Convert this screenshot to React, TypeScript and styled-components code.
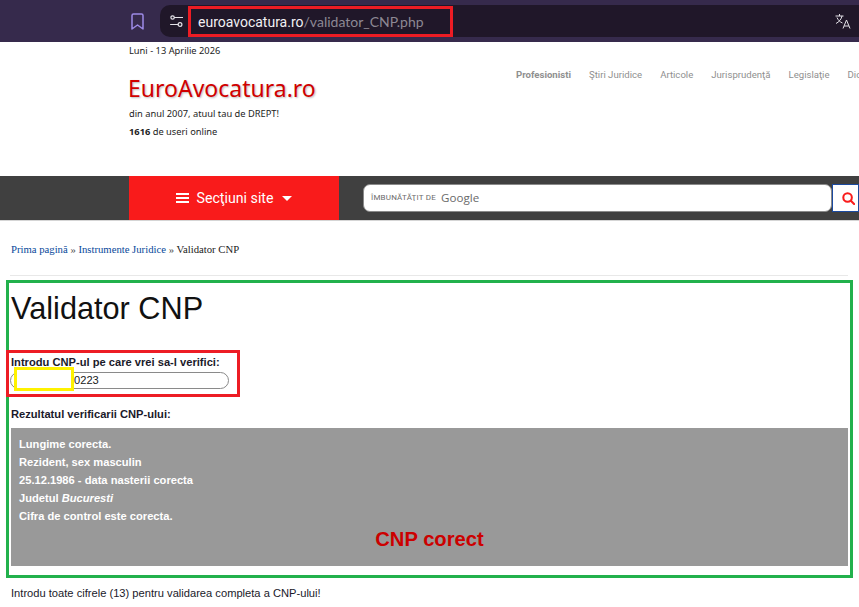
import React from "react";
import styled, { createGlobalStyle } from "styled-components";

const Global = createGlobalStyle`
  html, body { margin: 0; padding: 0; background: #fff; overflow: hidden; }
  body { width: 859px; height: 607px; font-family: "Liberation Sans", Arial, sans-serif; }
  * { box-sizing: border-box; }
`;
const Page = styled.div`
  width: 859px; height: 607px; overflow: hidden; display: flex; flex-direction: column;
`;
const BrowserBar = styled.div`
  height: 42px; flex: none; background: #362a4c; display: flex; align-items: center; padding: 0 0 0 131px;
`;
const BookmarkButton = styled.div`
  width: 13px; height: 17px; margin-right: 16px; display: flex; color: #9d8ae6;
`;
const AddressBar = styled.div`
  flex: 1; height: 32px; background: #201729; border-radius: 10px 0 0 10px; display: flex; align-items: center; padding-left: 10px; color: #e4e2e8;
`;
const TuneIcon = styled.div`
  width: 13px; height: 14px; display: flex; margin-right: 5px; color: #e4e2e8;
`;
const UrlHighlight = styled.div`
  width: 265px; height: 31px; border: 3px solid #ed1c24; display: flex; align-items: center; padding: 0 0 0 7px;
  font: 14px/1 "Roboto", sans-serif; white-space: nowrap; margin-top: 1px;
`;
const Host = styled.span` color: #f1f0f3; `;
const UrlPath = styled.span` color: #8d8894; font-family: "Lato", sans-serif; `;
const TranslateButton = styled.div`
  margin-left: auto; margin-right: 8px; width: 16px; height: 16px; display: flex; color: #e4e2e8;
`;
const Header = styled.header`
  height: 134px; flex: none; padding: 2px 0 0 129px; display: flex; overflow: hidden;
`;
const Brand = styled.div`
  width: 370px; flex: none; font-family: "Noto Sans", sans-serif; color: #1c1c1c;
`;
const Small = styled.div<{ $mt?: number }>`
  font-size: 9.3px; line-height: 13px; margin-top: ${(p) => p.$mt ?? 0}px; white-space: nowrap;
`;
const Logo = styled.div`
  font-size: 23px; line-height: 30px; margin-top: 16px; margin-left: -1px; color: #d00000; text-shadow: 1px 1px 2px #bbb; white-space: nowrap;
`;
const TopNav = styled.nav`
  display: flex; gap: 18px; padding: 24px 0 0 17px; font: 9.6px/13px "Roboto", sans-serif; color: #8f8f8f; white-space: nowrap;
`;
const NavItem = styled.span<{ $strong?: boolean }>`
  font-weight: ${(p) => (p.$strong ? 700 : 400)};
`;
const Band = styled.div`
  height: 45px; flex: none; background: #404040; padding-left: 129px; display: flex; align-items: stretch; border-bottom: 1px solid #d5d5d5;
`;
const Sections = styled.div`
  width: 210px; flex: none; background: #f91b1b; color: #fff; display: flex; align-items: center; justify-content: center; gap: 7px;
  font: 14.2px/1 "Roboto", sans-serif;
`;
const Caret = styled.span`
  width: 0; height: 0; margin-left: 1px; border: 5px solid transparent; border-top: 5px solid #fff; border-bottom: 0;
`;
const Search = styled.div`
  margin: 8px 0 8px 24px; display: flex; flex: 1;
`;
const SearchField = styled.div`
  flex: 1; background: #fff; border-radius: 7px; border: 1px solid #8a8a8a; display: flex; align-items: center; gap: 5px; padding-left: 7px;
`;
const Hint = styled.span`
  font: 8px/1 "Roboto", sans-serif; letter-spacing: 0.2px; color: #6c6c6c;
`;
const GoogleWord = styled.span`
  font: 11.6px/1 "Open Sans", sans-serif; color: #6a6a6a;
`;
const SearchButton = styled.div`
  width: 27px; flex: none; background: #fff; border: 1px solid #1b4aa0; display: flex; align-items: center; justify-content: center; padding-left: 5px; color: #f91b1b;
`;
const Main = styled.main`
  flex: 1; display: flex; flex-direction: column; padding: 0 6px;
`;
const Crumbs = styled.div`
  margin: 21px 5px 0 4px; padding: 0 0 19px 1px; height: 34px;
  font: 10.7px/14px "Liberation Serif", serif; color: #222; border-bottom: 1px solid #e8e8e8;
`;
const Crumb = styled.a` color: #07489a; `;
const Sep = styled.span` color: #555; `;
const Panel = styled.section`
  margin-top: 4px; height: 298px; border: 3px solid #22b14c; padding: 0 2px 0 2px; color: #1a1a1a;
`;
const Title = styled.h1`
  margin: 8px 0 0; font: 400 30.7px/36px "Liberation Sans", sans-serif; color: #111;
`;
const FormBox = styled.div`
  position: relative; margin: 23px 0 0 -5px; width: 234px; height: 47px; border: 3px solid #ed1c24; padding: 3px 0 0 2px;
`;
const Label = styled.div`
  font: 700 11.15px/13px "Liberation Sans", sans-serif; color: #1a1a2a;
`;
const CnpInput = styled.div`
  width: 219px; height: 17px; margin: 3px 0 0 -1px; border: 1px solid #8a8a8a; border-radius: 9px; padding-left: 63px;
  font: 11.15px/15px "Liberation Sans", sans-serif; color: #222;
`;
const Redaction = styled.div`
  position: absolute; left: 5px; top: 14px; width: 60px; height: 24px; background: #fff; border: 3px solid #fff200;
`;
const ResultLabel = styled(Label)`
  margin-top: 11px;
`;
const ResultBox = styled.div`
  margin-top: 7px; height: 138px; background: #999; padding: 7px 0 0 8px; color: #fff;
  font: 700 11.15px/18px "Liberation Sans", sans-serif; display: flex; flex-direction: column;
`;
const Verdict = styled.div`
  text-align: center; color: #cc0000; font: 700 20.2px/24px "Liberation Sans", sans-serif; margin-top: 2px; padding-right: 8px;
`;
const Note = styled.p`
  margin: 9px 0 0 5px; font: 11.15px/13px "Liberation Sans", sans-serif; color: #1a1a2a;
`;

const App: React.FC = () => (
  <Page>
    <Global />
    <BrowserBar>
      <BookmarkButton>
        <svg width="13" height="17" viewBox="0 0 13 17" fill="none" stroke="currentColor" strokeWidth="1.5" strokeLinejoin="round">
          <path d="M1 2.500a1.500 1.500 0 0 1 1.500-1.500h8a1.500 1.500 0 0 1 1.500 1.500V16L6.500 12 1 16Z" />
        </svg>
      </BookmarkButton>
      <AddressBar>
        <TuneIcon>
          <svg width="13" height="14" viewBox="0 0 13 14" fill="none" stroke="currentColor" strokeWidth="1.2" strokeLinecap="round">
            <circle cx="2.600" cy="3.500" r="1.700" />
            <path d="M4.500 3.500H12.500" />
            <path d="M0.600 10.500H8" />
            <circle cx="10" cy="10.500" r="1.900" />
          </svg>
        </TuneIcon>
        <UrlHighlight>
          <Host>euroavocatura.ro</Host>
          <UrlPath>/validator_CNP.php</UrlPath>
        </UrlHighlight>
        <TranslateButton>
          <svg width="16" height="16" viewBox="0 0 16 16" fill="none" stroke="currentColor" strokeWidth="1">
            <path d="M0.500 3h8M4.500 1v2M7 3C6.500 6 4 9 1 10.500M2 4.500c1 2.500 3 4.500 5.500 5.500" />
            <path d="M8 15.500 11.500 7l3.500 8.500M9.200 13h4.600" />
          </svg>
        </TranslateButton>
      </AddressBar>
    </BrowserBar>
    <Header>
      <Brand>
        <Small>Luni - 13 Aprilie 2026</Small>
        <Logo>EuroAvocatura.ro</Logo>
        <Small $mt={4}>din anul 2007, atuul tau de DREPT!</Small>
        <Small $mt={5}>
          <b>1616</b> de useri online
        </Small>
      </Brand>
      <TopNav>
        <NavItem $strong>Profesionisti</NavItem>
        <NavItem>Ştiri Juridice</NavItem>
        <NavItem>Articole</NavItem>
        <NavItem>Jurisprudenţă</NavItem>
        <NavItem>Legislaţie</NavItem>
        <NavItem>Dicţionar</NavItem>
      </TopNav>
    </Header>
    <Band>
      <Sections>
        <svg width="13" height="10" viewBox="0 0 13 10" fill="#fff">
          <path d="M0 0h13v2H0zM0 4h13v2H0zM0 8h13v2H0z" />
        </svg>
        <span>Secţiuni site</span>
        <Caret />
      </Sections>
      <Search>
        <SearchField>
          <Hint>ÎMBUNĂTĂŢIT DE</Hint>
          <GoogleWord>Google</GoogleWord>
        </SearchField>
        <SearchButton>
          <svg width="13" height="13" viewBox="0 0 14 14" fill="none" stroke="currentColor" strokeWidth="2.200" strokeLinecap="round">
            <circle cx="6" cy="6" r="4.600" />
            <path d="M9.500 9.500 13 13" />
          </svg>
        </SearchButton>
      </Search>
    </Band>
    <Main>
      <Crumbs>
        <Crumb>Prima pagină</Crumb> <Sep>»</Sep> <Crumb>Instrumente Juridice</Crumb> <Sep>»</Sep> Validator CNP
      </Crumbs>
      <Panel>
        <Title>Validator CNP</Title>
        <FormBox>
          <Label>Introdu CNP-ul pe care vrei sa-l verifici:</Label>
          <CnpInput>0223</CnpInput>
          <Redaction />
        </FormBox>
        <ResultLabel>Rezultatul verificarii CNP-ului:</ResultLabel>
        <ResultBox>
          <div>Lungime corecta.</div>
          <div>Rezident, sex masculin</div>
          <div>25.12.1986 - data nasterii corecta</div>
          <div>
            Judetul <i>Bucuresti</i>
          </div>
          <div>Cifra de control este corecta.</div>
          <Verdict>CNP corect</Verdict>
        </ResultBox>
      </Panel>
      <Note>Introdu toate cifrele (13) pentru validarea completa a CNP-ului!</Note>
    </Main>
  </Page>
);

export default App;
